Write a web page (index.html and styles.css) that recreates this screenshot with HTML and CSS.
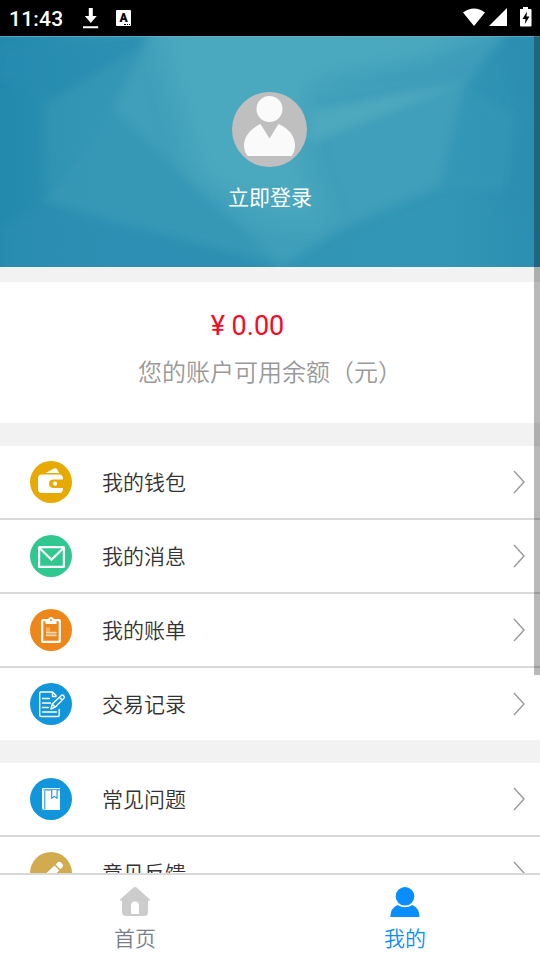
FILE: index.html
```html
<!DOCTYPE html>
<html lang="zh-CN">
<head>
<meta charset="utf-8">
<title>我的</title>
<link rel="stylesheet" href="styles.css">
</head>
<body>
<div class="app">
  <header class="status">
    <span class="clock">11:43</span>
    <svg class="download" width="16" height="22" viewBox="0 0 16 22" fill="#fff"><path d="M5.800 0h4v8h4L7.800 15 1.800 8h4zM0 18.200h15.200v2H0z"/></svg>
    <span class="badge">A<i></i></span>
    <svg class="signals" width="70" height="22" viewBox="0 0 70 22" fill="#fff"><path d="M0 5.500Q11-2.500 22 5.500L11 19zM26 19 44 1v18zM57 2h3V0h5v2h2.500q1 0 1 1v15.500q0 1-1 1H58q-1 0-1-1z"/><path d="M64 4.500 59.500 12h3l-.7 5 4.700-7.500h-3z" fill="#000"/></svg>
  </header>
  <main class="content">
    <section class="hero">
      <svg class="facets" viewBox="0 0 540 231" preserveAspectRatio="none">
        <defs>
          <filter id="soft" x="-10%" y="-10%" width="120%" height="120%"><feGaussianBlur stdDeviation="5"/></filter>
          <filter id="haze" x="-20%" y="-20%" width="140%" height="140%"><feGaussianBlur stdDeviation="12"/></filter>
          <linearGradient id="edge"><stop offset="0" stop-color="#2289ad"/><stop offset=".2" stop-color="#2f94b4"/><stop offset=".82" stop-color="#3296b6"/><stop offset="1" stop-color="#2b8fb2"/></linearGradient>
        </defs>
        <path fill="url(#edge)" d="M0 0h540v231H0z"/>
        <g filter="url(#soft)">
          <path d="M0 10 150 2 55 66 0 42z" fill="#268cb0" opacity=".6"/>
          <path d="M45 68 150 5 113 72 46 155z" fill="#3798b6" opacity=".6"/>
          <path d="M43 165 113 72 203 157 280 229z" fill="#3899b6" opacity=".75"/>
          <path d="M113 72 152-6H506L465 50 440 150 345 191 282 229 190 145z" fill="#419fba"/>
          <path d="M310 46 506 0 465 45z" fill="#399bb9" opacity=".6"/>
          <path d="M310 75 462 48 400 72 310 107z" fill="#50abbf" opacity=".8"/>
          <path d="M462 50 515 80 505 155 440 150z" fill="#3698b7" opacity=".5"/>
          <path d="M506-5H550V200L500 168 520 80z" fill="#288db1" opacity=".5"/>
          <path d="M0 190 45 170 270 226V240H0z" fill="#298eb2" opacity=".65"/>
        </g>
        <g filter="url(#haze)">
          <path d="M155-12H500L420 24 310 46 300 120 325 185 270 180 200 140z" fill="#4caabf" opacity=".85"/>
        </g>
        <path d="M0 .5h540" stroke="#6cabc8" opacity=".8"/>
      </svg>
      <svg class="avatar" width="75" height="75" viewBox="0 0 75 75"><circle cx="37.500" cy="37.500" r="37.500" fill="#bfbfbf"/><path d="M28.500 32 37.500 46.500 46.500 32C58 37 63.200 45 63 54q-.2 6-3.500 10H15.800q-3.600-4-3.800-10C11.800 45 18 37 28.500 32z" fill="#fafafa"/><circle cx="37.500" cy="17" r="13" fill="#fafafa"/></svg>
      <div class="login">立即登录</div>
    </section>
    <section class="balance">
      <div class="amount">¥ 0.00</div>
      <div class="caption">您的账户可用余额（元）</div>
    </section>
    <ul class="menu">
      <li class="row">
        <svg class="icon" viewBox="0 0 42 42"><circle cx="21" cy="21" r="21" fill="#e6aa02"/><path d="M15.500 12 24 7.500q2-.8 3 .7l2.300 3.800z" fill="#fff"/><path d="M12 13.500h17.500q3.500 0 3.500 4.500v9q0 5-3.500 5H12q-4 0-4-4V17.500q0-4 4-4z" fill="#fff"/><path d="M34 18.500H24q-5 0-5 4.200t5 4.200H34z" fill="#e6aa02"/><circle cx="25" cy="22.700" r="2.100" fill="#fff"/></svg>
        <span class="label">我的钱包</span><svg class="arrow" viewBox="0 0 12 24"><path d="M1 1 11 12 1 23"/></svg>
      </li>
      <li class="row">
        <svg class="icon" viewBox="0 0 42 42"><circle cx="21" cy="21" r="21" fill="#30c890"/><g fill="none" stroke="#fff" stroke-width="2.200"><rect x="9.100" y="12.100" width="24.800" height="19.800" rx=".5"/><path d="m10 13.500 11.500 11.300L33 13.500"/></g></svg>
        <span class="label">我的消息</span><svg class="arrow" viewBox="0 0 12 24"><path d="M1 1 11 12 1 23"/></svg>
      </li>
      <li class="row">
        <svg class="icon" viewBox="0 0 42 42"><circle cx="21" cy="21" r="21" fill="#ee871b"/><rect x="12.200" y="11.200" width="17.600" height="21.600" rx=".8" fill="none" stroke="#fff" stroke-width="2.200"/><path d="M15.500 15v-3.500H18q.2-3.500 3-3.500t3 3.500h2.500V15z" fill="#fff"/><circle cx="21" cy="11" r="1" fill="#ee871b"/><path d="M16 18.500h4v4h-4zM16 22.500h10.500v5H16z" fill="#fff" opacity=".35"/><path d="M16 23.500h10.500M16 26.500h10.500" stroke="#fff" opacity=".5"/></svg>
        <span class="label">我的账单</span><svg class="arrow" viewBox="0 0 12 24"><path d="M1 1 11 12 1 23"/></svg>
      </li>
      <li class="row">
        <svg class="icon" viewBox="0 0 42 42"><circle cx="21" cy="21" r="21" fill="#1296db"/><g fill="none" stroke="#fff" stroke-width="1.400" stroke-linecap="round" stroke-linejoin="round"><path d="M26 13v-.5L22.500 9H11Q9.700 9 9.700 10.500V32q0 1.500 1.500 1.500h16.500q1.500 0 1.500-1.500v-5.500M22.500 9v4.500H26M12.500 15.500h7M12.500 20h8M12.500 24.500h6M12.500 29h14"/><path d="m21 26 1.200-5 9.200-8.500q1.200-1 2.300.2t.2 2.500l-8.800 9zM22.200 21l2.800 3M29.500 14.300l2.700 2.800"/></g></svg>
        <span class="label">交易记录</span><svg class="arrow" viewBox="0 0 12 24"><path d="M1 1 11 12 1 23"/></svg>
      </li>
    </ul>
    <ul class="menu">
      <li class="row">
        <svg class="icon" viewBox="0 0 42 42"><circle cx="21" cy="21" r="21" fill="#1296db"/><path d="M13 10h17v1.200H13.500v1.300H30V32H14q-2 0-2-2V11.500q0-1.500 1-1.500z" fill="#fff"/><path d="M14.800 13v18.500" stroke="#1296db"/><path d="M21.700 12v8.300l2.700-1.900 2.700 1.900V12" fill="#fff" stroke="#1296db" stroke-width="1.100"/></svg>
        <span class="label">常见问题</span><svg class="arrow" viewBox="0 0 12 24"><path d="M1 1 11 12 1 23"/></svg>
      </li>
      <li class="row">
        <svg class="icon" viewBox="0 0 42 42"><circle cx="21" cy="21" r="21" fill="#d2ab4f"/><path d="m11 26 13.500-12.400 4.800 4.900L15.500 31 10 32zM25.600 12.500l1.900-2q1.800-1.600 3.300-.2l1.700 1.800q1.300 1.700-.3 3.300l-1.900 1.900z" fill="#fff"/></svg>
        <span class="label">意见反馈</span><svg class="arrow" viewBox="0 0 12 24"><path d="M1 1 11 12 1 23"/></svg>
      </li>
    </ul>
    <div class="scrollbar"></div>
  </main>
  <nav class="tabs">
    <div class="tab"><svg width="30" height="30" viewBox="0 0 30 30"><path d="M13.200.8q1.800-1.400 3.600 0L29.500 12q.8 1-.2 1.700H28V25q0 4-4 4H6q-4 0-4-4V13.700H.7Q-.3 13 .5 12zM11 27h8v-8.500q0-4-4-4t-4 4z" fill="#ccc" fill-rule="evenodd"/></svg><span>首页</span></div>
    <div class="tab active"><svg width="30" height="30" viewBox="0 0 30 30" fill="#0a8efe"><circle cx="15" cy="9.300" r="9.300"/><path d="M.3 30Q.5 21 7.500 18q7.500 4.700 15 0Q29.300 21 29.500 30z"/></svg><span>我的</span></div>
  </nav>
</div>
</body>
</html>
```
FILE: styles.css
```css
* { box-sizing: border-box; }
body {
  margin: 0;
  background: #fff;
  font-family: Roboto, "Noto Sans CJK SC", sans-serif;
  font-weight: 350;
}
.app {
  width: 540px;
  height: 960px;
  display: flex;
  flex-direction: column;
  overflow: hidden;
}
.status {
  height: 36px;
  flex: none;
  display: flex;
  align-items: center;
  background: #000;
  color: #fff;
  padding: 0 9px;
}
.clock {
  width: 74px;
  padding-top: 1px;
  font-size: 21px;
  font-weight: 500;
  letter-spacing: 0.2px;
  line-height: 36px;
}
.download { margin-top: 2px; }
.badge {
  width: 15px;
  height: 16px;
  margin-left: 17px;
  border-radius: 1px;
  background: #fff;
  color: #000;
  font-size: 12px;
  font-weight: 900;
  line-height: 16px;
  text-align: center;
  position: relative;
}
.badge i {
  position: absolute;
  right: 1px;
  bottom: 1px;
  width: 6px;
  border-bottom: 1px dotted #000;
}
.signals { margin-left: auto; margin-right: -2px; }
.content {
  flex: 1;
  min-height: 0;
  overflow: hidden;
  background: #f2f2f2;
  position: relative;
}
.hero {
  height: 231px;
  padding-top: 56px;
  display: flex;
  flex-direction: column;
  align-items: center;
  position: relative;
}
.facets {
  position: absolute;
  inset: 0;
  width: 100%;
  height: 100%;
}
.avatar { position: relative; left: -0.5px; }
.login {
  position: relative;
  margin-top: 16px;
  color: #fff;
  font-size: 21px;
  font-weight: 400;
  line-height: 30px;
}
.balance {
  height: 141px;
  margin-top: 15px;
  padding-top: 26px;
  background: #fff;
  text-align: center;
}
.amount {
  padding-right: 45px;
  color: #fb0725;
  font-size: 27px;
  font-weight: 400;
  line-height: 36px;
}
.caption {
  margin-top: 11px;
  color: #999;
  font-size: 24px;
  line-height: 36px;
}
.menu {
  list-style: none;
  margin: 23px 0 0;
  padding: 0;
  background: #fff;
}
.row {
  height: 72px;
  display: flex;
  align-items: center;
  padding: 0 15px 0 30px;
}
.row + .row {
  height: 74px;
  border-top: 2px solid #d9d9d9;
}
.icon { width: 42px; height: 42px; }
.label {
  margin-left: 30px;
  padding-top: 2px;
  flex: 1;
  color: #333;
  font-size: 21px;
  line-height: 30px;
}
.arrow {
  width: 12px;
  height: 24px;
  fill: none;
  stroke: #999;
  stroke-width: 1.4;
}
.scrollbar {
  position: absolute;
  top: 0;
  right: 0;
  width: 6px;
  height: 639px;
  background: rgba(0, 0, 0, 0.28);
}
.tabs {
  height: 87px;
  flex: none;
  display: flex;
  border-top: 2px solid #d9d9d9;
  background: #fff;
}
.tab {
  flex: 1;
  padding-top: 12px;
  display: flex;
  flex-direction: column;
  align-items: center;
  color: #7a7e8c;
  font-size: 21px;
  line-height: 30px;
}
.tab span { margin-top: 7px; }
.active { color: #0a8efe; }
```
